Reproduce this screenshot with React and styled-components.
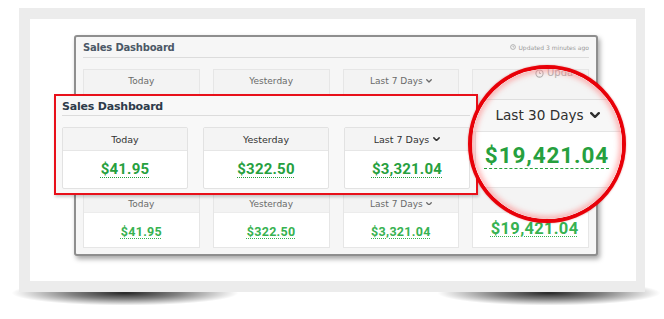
import React from 'react';
import styled, { createGlobalStyle } from 'styled-components';

const GlobalStyle = createGlobalStyle`
  html, body { margin: 0; padding: 0; background: #ffffff; }
  body { font-family: "DejaVu Sans", Verdana, sans-serif; }
`;

const Stage = styled.div`
  position: relative;
  z-index: 0;
  width: 664px;
  height: 319px;
  box-sizing: border-box;
  padding: 8px 0 0 19px;
  overflow: hidden;
  background: #ffffff;
`;

const Frame = styled.div`
  position: relative;
  width: 626px;
  height: 284px;
  box-sizing: border-box;
  padding: 11px 9px 11px 11px;
  background: #ececec;
  &::before,
  &::after {
    content: "";
    position: absolute;
    z-index: -1;
    top: calc(100% - 12px);
    height: 26px;
    background: radial-gradient(ellipse at center, rgba(0,0,0,0.85) 0%, rgba(0,0,0,0.5) 32%, rgba(0,0,0,0) 68%);
  }
  &::before { left: -12px; width: 236px; }
  &::after { right: -20px; width: 232px; }
`;

const Canvas = styled.div`
  position: relative;
  height: 100%;
  box-sizing: border-box;
  padding: 16px 0 0 44px;
  background: #ffffff;
`;

/* ---------- background dashboard ---------- */
const BackPanel = styled.section`
  width: 524px;
  height: 221px;
  box-sizing: border-box;
  display: flex;
  flex-direction: column;
  padding: 0 7px 6px;
  border: 2px solid #8e8e8e;
  border-radius: 3px;
  background: #f6f6f6;
  box-shadow: 2px 3px 5px rgba(0, 0, 0, 0.35);
`;

const PanelHeader = styled.header`
  display: flex;
  align-items: center;
  justify-content: space-between;
  height: ${p => p.$h}px;
  box-sizing: border-box;
  padding-top: ${p => p.$pt || 0}px;
  border-bottom: 1px solid #dcdcdc;
`;

const Title = styled.h2`
  margin: 0;
  font-family: "DejaVu Sans", Verdana, sans-serif;
  font-weight: bold;
  font-size: ${p => p.$size}px;
  color: ${p => p.$color};
  letter-spacing: -0.2px;
`;

const Updated = styled.span`
  display: flex;
  align-items: center;
  gap: 2px;
  font-size: 6px;
  color: #9a9a9a;
`;

const BackGrid = styled.div`
  display: grid;
  grid-template-columns: repeat(4, 1fr);
  column-gap: 13px;
  margin-top: 11px;
  height: 179px;
`;

const BackCard = styled.div`
  display: flex;
  flex-direction: column;
  border: 1px solid #e6e6e6;
  background: #f3f3f3;
`;

const BackLabel = styled.div`
  display: flex;
  align-items: center;
  justify-content: center;
  gap: 3px;
  height: ${p => p.$h}px;
  font-size: 9px;
  color: #6a6a6a;
`;

const BackFill = styled.div`
  flex: 1;
`;

const BackValueCell = styled.div`
  display: flex;
  align-items: center;
  justify-content: center;
  height: 35px;
  padding: ${p => (p.$big ? '0 0 2px 8px' : '4px 0 0 0')};
  box-sizing: border-box;
  background: #ffffff;
  border-top: 1px solid #ececec;
`;

const Money = styled.span`
  font-family: Roboto, "Liberation Sans", sans-serif;
  font-weight: bold;
  font-size: ${p => p.$size}px;
  letter-spacing: ${p => p.$ls || 0}px;
  color: ${p => p.$color};
  text-decoration: underline ${p => p.$dash || 'dotted'};
  text-decoration-thickness: 1px;
  text-underline-offset: ${p => p.$off || 3}px;
  line-height: 1;
`;

/* ---------- front (red) dashboard ---------- */
const FrontPanel = styled.section`
  position: absolute;
  left: 24px;
  top: 75px;
  width: 424px;
  height: 101px;
  box-sizing: border-box;
  display: flex;
  flex-direction: column;
  padding: 0 6px;
  border: 2px solid #e8101a;
  background: #f8f8f8;
  box-shadow: 1px 2px 3px rgba(0, 0, 0, 0.2);
`;

const FrontGrid = styled.div`
  display: grid;
  grid-template-columns: repeat(3, 126px);
  column-gap: 15px;
  margin-top: 11px;
`;

const FrontCard = styled.div`
  display: flex;
  flex-direction: column;
  border: 1px solid #e2e2e2;
  border-radius: 2px;
  background: #ffffff;
`;

const FrontLabel = styled.div`
  display: flex;
  align-items: center;
  justify-content: center;
  gap: 4px;
  height: 22px;
  background: #f4f4f4;
  border-bottom: 1px solid #e6e6e6;
  font-size: 9.5px;
  color: #333333;
`;

const FrontValueCell = styled.div`
  display: flex;
  align-items: center;
  justify-content: center;
  height: 37px;
  padding-bottom: 1px;
  box-sizing: border-box;
`;

/* ---------- magnifier ---------- */
const Magnifier = styled.div`
  position: absolute;
  left: 438px;
  top: 46px;
  width: 158px;
  height: 158px;
  box-sizing: border-box;
  border-radius: 50%;
  border: 4px solid #e80008;
  overflow: hidden;
  display: flex;
  flex-direction: column;
  background: #f4f4f4;
  box-shadow: 0 0 2px rgba(200, 0, 0, 0.4);
  &::after {
    content: "";
    position: absolute;
    inset: 0;
    border-radius: 50%;
    box-shadow: inset 0 0 5px 3px rgba(255, 120, 120, 0.5);
    pointer-events: none;
  }
`;

const MagTop = styled.div`
  height: 30px;
  box-sizing: border-box;
  padding-left: 63px;
  display: flex;
  align-items: flex-start;
  gap: 3px;
  font-size: 10px;
  line-height: 8px;
  color: #b0b0b0;
  white-space: nowrap;
  background: #f4f4f4;
`;

const MagCard = styled.div`
  margin-left: 3px;
  border-left: 1px solid #e4e4e4;
  border-top: 1px solid #dedede;
  border-bottom: 1px solid #e4e4e4;
`;

const MagHeader = styled.div`
  display: flex;
  align-items: center;
  justify-content: center;
  gap: 6px;
  height: 32px;
  box-sizing: border-box;
  padding: 0 0 1px 0;
  margin-left: -3px;
  background: #f7f7f7;
  border-bottom: 1px solid #e4e4e4;
  font-size: 13.6px;
  color: #2f2f2f;
`;

const MagValue = styled.div`
  display: flex;
  align-items: center;
  justify-content: center;
  height: 55px;
  box-sizing: border-box;
  padding: 0 4px 9px 0;
  background: #ffffff;
`;

const MagBottom = styled.div`
  flex: 1;
  background: #f4f4f4;
`;

const Chevron = ({ size = 7, weight = 2.2 }) => (
  <svg width={size} height={size * 0.62} viewBox="0 0 10 6.2" aria-hidden="true">
    <path d="M1.2 1.2 L5 5 L8.8 1.2" fill="none" stroke="currentColor" strokeWidth={weight} strokeLinecap="round" strokeLinejoin="round" />
  </svg>
);

const Clock = ({ size = 6 }) => (
  <svg width={size} height={size} viewBox="0 0 12 12" aria-hidden="true">
    <circle cx="6" cy="6" r="4.8" fill="none" stroke="currentColor" strokeWidth="1.4" />
    <path d="M6 3.4 V6 H8" fill="none" stroke="currentColor" strokeWidth="1.2" />
  </svg>
);

const GREEN = '#26a03e';
const GREEN_SOFT = '#37b251';

const backCards = [
  { label: 'Today', value: '$41.95' },
  { label: 'Yesterday', value: '$322.50' },
  { label: 'Last 7 Days', value: '$3,321.04', chevron: true },
  { label: '', value: '$19,421.04', big: true },
];

const frontCards = [
  { label: 'Today', value: '$41.95' },
  { label: 'Yesterday', value: '$322.50' },
  { label: 'Last 7 Days', value: '$3,321.04', chevron: true },
];

export default function App() {
  return (
    <>
      <GlobalStyle />
      <Stage>
        <Frame>
          <Canvas>
            <BackPanel>
              <PanelHeader $h={21}>
                <Title $size={10} $color="#4b5866">Sales Dashboard</Title>
                <Updated><Clock /> Updated 3 minutes ago</Updated>
              </PanelHeader>
              <BackGrid>
                {backCards.map((c, i) => (
                  <BackCard key={i}>
                    <BackLabel $h={22}>{c.label}{c.chevron && <Chevron size={6} />}</BackLabel>
                    <BackFill />
                    <BackLabel $h={17}>{c.label}{c.chevron && <Chevron size={6} />}</BackLabel>
                    <BackValueCell $big={c.big}>
                      <Money $size={c.big ? 16.5 : 12.5} $ls={0.3} $color={GREEN_SOFT} $off={2}>{c.value}</Money>
                    </BackValueCell>
                  </BackCard>
                ))}
              </BackGrid>
            </BackPanel>

            <FrontPanel>
              <PanelHeader $h={20} $pt={1}>
                <Title $size={11} $color="#2d3b4a">Sales Dashboard</Title>
              </PanelHeader>
              <FrontGrid>
                {frontCards.map(c => (
                  <FrontCard key={c.label}>
                    <FrontLabel>{c.label}{c.chevron && <Chevron size={7} />}</FrontLabel>
                    <FrontValueCell>
                      <Money $size={15} $ls={0.2} $color={GREEN} $off={3}>{c.value}</Money>
                    </FrontValueCell>
                  </FrontCard>
                ))}
              </FrontGrid>
            </FrontPanel>

            <Magnifier>
              <MagTop><Clock size={9} /> Upda</MagTop>
              <MagCard>
                <MagHeader>Last 30 Days <Chevron size={10} weight={2.4} /></MagHeader>
                <MagValue>
                  <Money $size={22.5} $ls={0.9} $color={GREEN} $dash="dashed" $off={5}>$19,421.04</Money>
                </MagValue>
              </MagCard>
              <MagBottom />
            </Magnifier>
          </Canvas>
        </Frame>
      </Stage>
    </>
  );
}
